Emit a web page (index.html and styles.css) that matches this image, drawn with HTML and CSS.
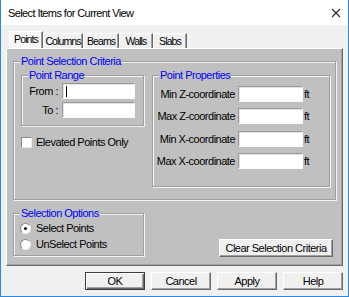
FILE: index.html
```html
<!DOCTYPE html>
<html lang="en">
<head>
    <meta charset="UTF-8">
    <title>Select Items for Current View</title>
    <link rel="stylesheet" href="styles.css">
</head>
<body>
    <div class="window">
        <div class="titlebar">
            <span class="title">Select Items for Current View</span>
            <svg class="close" width="10" height="10" viewBox="0 0 10 10">
                <path d="M1 1 L9 9 M9 1 L1 9" stroke="#222" stroke-width="1.1" fill="none"/>
            </svg>
        </div>

        <div class="client">
            <div class="tabs">
                <div class="tab active tab-points">Points</div>
                <div class="tab tab-columns">Columns</div>
                <div class="tab tab-beams">Beams</div>
                <div class="tab tab-walls">Walls</div>
                <div class="tab tab-slabs">Slabs</div>
            </div>

            <div class="page">
                <div class="group criteria">
                    <span class="legend">Point Selection Criteria</span>
                    <div class="criteria-body">
                        <div class="left-col">
                            <div class="group range">
                                <span class="legend">Point Range</span>
                                <span class="range-label">From :</span>
                                <span class="field range-field"><i class="caret"></i></span>
                                <span class="range-label">To :</span>
                                <span class="field range-field"></span>
                            </div>
                            <label class="check-row">
                                <span class="checkbox"></span>
                                <span>Elevated Points Only</span>
                            </label>
                        </div>

                        <div class="group props">
                            <span class="legend">Point Properties</span>
                            <div class="prop-row">
                                <span class="prop-label">Min Z-coordinate</span>
                                <span class="field prop-field"></span>
                                <span class="unit">ft</span>
                            </div>
                            <div class="prop-row">
                                <span class="prop-label">Max Z-coordinate</span>
                                <span class="field prop-field"></span>
                                <span class="unit">ft</span>
                            </div>
                            <div class="prop-row spaced">
                                <span class="prop-label">Min X-coordinate</span>
                                <span class="field prop-field"></span>
                                <span class="unit">ft</span>
                            </div>
                            <div class="prop-row">
                                <span class="prop-label">Max X-coordinate</span>
                                <span class="field prop-field"></span>
                                <span class="unit">ft</span>
                            </div>
                        </div>
                    </div>
                </div>

                <div class="page-bottom">
                    <div class="group options">
                        <span class="legend">Selection Options</span>
                        <label class="radio-row">
                            <span class="radio checked"></span>
                            <span>Select Points</span>
                        </label>
                        <label class="radio-row">
                            <span class="radio"></span>
                            <span>UnSelect Points</span>
                        </label>
                    </div>
                    <button class="btn clear-btn">Clear Selection Criteria</button>
                </div>
            </div>

            <div class="buttons">
                <button class="btn default">OK</button>
                <button class="btn">Cancel</button>
                <button class="btn">Apply</button>
                <button class="btn">Help</button>
            </div>
        </div>
    </div>
</body>
</html>
```

FILE: styles.css
```css
* {
    box-sizing: border-box;
}
body {
    margin: 0;
    font-family: "Liberation Sans", Arial, sans-serif;
    font-size: 11px;
    letter-spacing: -0.5px;
    color: #000;
}
.window {
    width: 349px;
    height: 297px;
    border: 1px solid #2b8ae0;
    border-top: none;
    background: #f0f0f0;
    display: flex;
    flex-direction: column;
}
.titlebar {
    height: 25px;
    background: #fff;
    display: flex;
    align-items: center;
    justify-content: space-between;
    padding: 0 7px;
}
.title {
    letter-spacing: -0.6px;
    padding-top: 1px;
}
.close {
    display: block;
    margin-top: 1px;
}
.client {
    padding: 6px 5px 0;
}

/* tabs */
.tabs {
    display: flex;
    align-items: flex-end;
    height: 17px;
    padding-left: 3px;
}
.tab {
    height: 15px;
    line-height: 14px;
    text-align: center;
    white-space: nowrap;
    background: #f0f0f0;
    border-top: 1px solid #fff;
    border-left: 1px solid #fff;
    border-right: 1px solid #696969;
    box-shadow: inset -1px 0 0 #a0a0a0;
    font-size: 10.5px;
    letter-spacing: -0.9px;
}
.tab.active {
    height: 17px;
    line-height: 14px;
    background: #f7f7f7;
}
.tab-points { width: 34px; }
.tab-columns { width: 40px; }
.tab-beams { width: 36px; }
.tab-walls { width: 34px; }
.tab-slabs { width: 34px; }

/* tab page */
.page {
    height: 218px;
    background: #c0c0c0;
    border-top: 1px solid #fff;
    border-left: 1px solid #fff;
    border-right: 1px solid #696969;
    border-bottom: 1px solid #696969;
    box-shadow: inset -1px -1px 0 #a0a0a0;
    padding: 12px 6px 0;
}

/* group boxes */
.group {
    position: relative;
    border: 1px solid #a0a0a0;
    box-shadow: inset 1px 1px 0 #f4f4f4, 1px 1px 0 #f4f4f4;
}
.legend {
    position: absolute;
    top: -7px;
    left: 6px;
    padding: 0 1px;
    line-height: 13px;
    background: #c0c0c0;
    color: #0000ff;
}
.criteria {
    height: 139px;
}
.criteria-body {
    display: flex;
    gap: 8px;
    padding: 13px 5px 0 7px;
}
.left-col {
    width: 123px;
}
.range {
    height: 51px;
    display: grid;
    grid-template-columns: 36px 73px;
    column-gap: 4px;
    row-gap: 3px;
    align-content: start;
    align-items: center;
    padding-top: 7px;
}
.range-label {
    text-align: right;
}
.field {
    display: block;
    height: 16px;
    background: #fff;
    border: 1px solid;
    border-color: #9a9a9a #fafafa #fafafa #9a9a9a;
    box-shadow: inset 1px 1px 0 #e3e3e3;
    padding: 2px 0 0 3px;
}
.range-field {
    width: 73px;
}
.caret {
    display: block;
    width: 1px;
    height: 11px;
    background: #000;
}
.check-row {
    display: flex;
    align-items: center;
    gap: 4px;
    margin-top: 10px;
    height: 12px;
}
.checkbox {
    width: 11px;
    height: 11px;
    background: #fff;
    border: 1px solid;
    border-color: #8a8a8a #e8e8e8 #e8e8e8 #8a8a8a;
}

.props {
    width: 178px;
    height: 112px;
    display: flex;
    flex-direction: column;
    gap: 6px;
    padding-top: 10px;
}
.prop-row {
    display: flex;
    align-items: center;
    height: 16px;
}
.prop-row.spaced {
    margin-top: 1px;
}
.prop-label {
    width: 82px;
    text-align: right;
}
.prop-field {
    width: 65px;
    margin: 0 1px 0 3px;
}

/* bottom part of the page */
.page-bottom {
    display: flex;
    justify-content: space-between;
    align-items: flex-start;
    margin-top: 13px;
}
.options {
    width: 131px;
    height: 43px;
    padding: 6px 0 0 6px;
}
.radio-row {
    display: flex;
    align-items: center;
    gap: 5px;
    height: 16px;
}
.radio {
    width: 11px;
    height: 11px;
    border-radius: 50%;
    background: #fff;
    border: 1px solid;
    border-color: #8a8a8a #eeeeee #eeeeee #8a8a8a;
    display: flex;
    align-items: center;
    justify-content: center;
}
.radio.checked::after {
    content: "";
    width: 3px;
    height: 3px;
    border-radius: 50%;
    background: #000;
}

/* buttons */
.btn {
    height: 18px;
    padding: 0;
    background: #f0f0f0;
    border: 1px solid;
    border-color: #fff #696969 #696969 #fff;
    box-shadow: inset -1px -1px 0 #a0a0a0;
    font-family: inherit;
    font-size: 11px;
    letter-spacing: -0.5px;
    color: #000;
}
.clear-btn {
    width: 114px;
    margin: 26px 3px 0 0;
}
.buttons {
    display: flex;
    justify-content: flex-end;
    gap: 6px;
    margin-top: 6px;
}
.buttons .btn {
    width: 60px;
}
.btn.default {
    border-color: #3c3c3c;
    box-shadow: inset 1px 1px 0 #fff, inset -1px -1px 0 #696969, inset -2px -2px 0 #a0a0a0;
}
```
